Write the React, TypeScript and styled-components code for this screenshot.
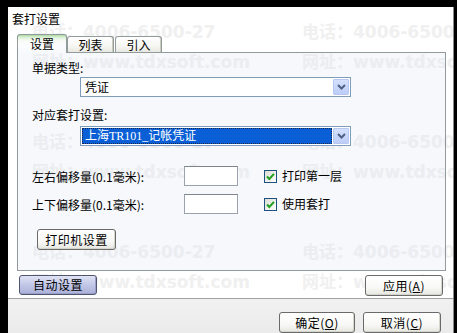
import styled, { createGlobalStyle } from 'styled-components';

const GlobalStyle = createGlobalStyle`
	html, body {
		margin: 0;
		padding: 0;
		background: #000;
		overflow: hidden;
	}
	body {
		font-family: "Noto Sans CJK SC", "Liberation Sans", sans-serif;
		font-size: 12px;
		color: #000;
	}
`;

const Dialog = styled.div`
	position: relative;
	margin: 7px 0 0 8px;
	width: 445px;
	height: 326px;
	background: #fff;
	border-right: 1px solid #8a8a8a;
	overflow: hidden;
`;

const Watermark = styled.div`
	position: absolute;
	inset: 0;
	z-index: 0;
	pointer-events: none;
	display: grid;
	grid-template-columns: repeat(2, 270px);
	grid-auto-rows: 110px;
	padding: 10px 0 0 24px;
	font: bold 17px "DejaVu Sans", "Noto Sans CJK SC", sans-serif;
	line-height: 30px;
	color: #f0f0f0;
	white-space: nowrap;
`;

const Content = styled.div`
	position: relative;
	z-index: 1;
	height: 100%;
	display: flex;
	flex-direction: column;
`;

const Title = styled.div`
	height: 34px;
	box-sizing: border-box;
	padding: 5px 0 0 4px;
	line-height: 14px;
`;

const TabArea = styled.div`
	margin-left: 9px;
	width: 429px;
`;

const TabStrip = styled.div`
	position: relative;
	z-index: 2;
	display: flex;
	align-items: flex-end;
	gap: 1px;
	height: 19px;
	margin-bottom: -1px;
`;

const Tab = styled.div<{ $active?: boolean }>`
	box-sizing: border-box;
	display: flex;
	align-items: center;
	justify-content: center;
	width: ${(p) => (p.$active ? 50 : 47)}px;
	height: ${(p) => (p.$active ? 19 : 16)}px;
	margin-bottom: ${(p) => (p.$active ? 0 : 1)}px;
	margin-right: ${(p) => (p.$active ? -1 : 0)}px;
	border: 1px solid #919b9c;
	border-bottom: none;
	border-radius: 3px 3px 0 0;
	background: ${(p) =>
		p.$active
			? 'linear-gradient(#a9d8a0 0px, #d6eed0 2px, #f4faf2 5px, #fbfcfd 9px, #f8f9fc 100%)'
			: 'linear-gradient(#ffffff, #f6f6f3 60%, #e8e7e0)'};
	box-shadow: ${(p) => (p.$active ? 'none' : 'inset -1px 0 0 #cdcbbd')};
	line-height: 14px;
	padding-top: ${(p) => (p.$active ? 0 : 1)}px;
`;

const Panel = styled.div`
	box-sizing: border-box;
	height: 219px;
	border: 1px solid #919b9c;
	background: rgba(220, 228, 245, 0.25);
	padding: 8px 0 0 14px;
	display: flex;
	flex-direction: column;
	align-items: flex-start;
`;

const FieldLabel = styled.div<{ $gap?: number }>`
	line-height: 14px;
	height: 14px;
	margin-top: ${(p) => p.$gap ?? 0}px;
`;

const Combo = styled.div<{ $gap: number }>`
	box-sizing: border-box;
	width: 271px;
	height: 20px;
	margin: ${(p) => p.$gap}px 0 0 48px;
	border: 1px solid #7f9db9;
	background: #fff;
	display: flex;
	align-items: center;
	padding-left: 1px;
`;

const ComboText = styled.div<{ $selected?: boolean }>`
	flex: 1;
	box-sizing: border-box;
	height: 16px;
	line-height: 14px;
	padding-left: 2px;
	margin-right: 1px;
	color: ${(p) => (p.$selected ? '#fff' : '#000')};
	background: ${(p) => (p.$selected ? '#0a5fd6' : 'transparent')};
	border: 1px ${(p) => (p.$selected ? 'dotted #1a2a50' : 'solid transparent')};
	font-family: ${(p) =>
		p.$selected ? '"Liberation Serif", "Noto Sans CJK SC", serif' : 'inherit'};
`;

const DropButton = styled.div`
	box-sizing: border-box;
	width: 16px;
	height: 16px;
	margin-right: 1px;
	border: 1px solid #b6c8f2;
	border-radius: 1px;
	background: linear-gradient(#d4e0fd, #bccdf8);
	display: flex;
	align-items: center;
	justify-content: center;
`;

const OffsetBlock = styled.div`
	margin-top: 20px;
	display: flex;
	flex-direction: column;
	gap: 8px;
`;

const OffsetRow = styled.div`
	display: flex;
	align-items: center;
	height: 20px;
`;

const OffsetLabel = styled.div`
	width: 152px;
	line-height: 14px;
	padding-top: 2px;
`;

const NumberBox = styled.input`
	box-sizing: border-box;
	width: 54px;
	height: 20px;
	margin: 0;
	border: 1px solid #9aa3ad;
	border-top-color: #7d848c;
	background: #fff;
	font: inherit;
	padding: 0 2px;
`;

const CheckLabel = styled.label`
	display: flex;
	align-items: center;
	gap: 5px;
	margin-left: 26px;
	line-height: 14px;
`;

const CheckBox = styled.span`
	box-sizing: border-box;
	width: 13px;
	height: 13px;
	border: 1px solid #1c5180;
	background: linear-gradient(135deg, #dcdcd5, #ffffff);
	display: flex;
	align-items: center;
	justify-content: center;
`;

const Button = styled.button<{ $w: number; $tone?: 'blue' }>`
	box-sizing: border-box;
	width: ${(p) => p.$w}px;
	height: ${(p) => (p.$tone === 'blue' ? 20 : 21)}px;
	padding: 0;
	margin: 0;
	border: 1px solid ${(p) => (p.$tone === 'blue' ? '#50556f' : '#6a6a6a')};
	border-radius: 3px;
	background: ${(p) =>
		p.$tone === 'blue'
			? 'linear-gradient(#e0e3f4, #c4c9e8 45%, #aab0d8)'
			: 'linear-gradient(#ffffff, #f8f8f6 60%, #e6e6e0)'};
	box-shadow: inset -1px -1px 0 ${(p) => (p.$tone === 'blue' ? '#9aa0c8' : '#d6d5cc')};
	font: 12px "Noto Sans CJK SC", "Liberation Sans", sans-serif;
	color: #000;
	line-height: 14px;
	letter-spacing: 0.5px;
`;

const PrinterButton = styled(Button)`
	margin: 15px 0 0 5px;
`;

const ActionRow = styled.div`
	margin-top: 4px;
	padding: 0 10px 0 11px;
	display: flex;
	justify-content: space-between;
	align-items: flex-start;
	height: 21px;
`;

const Footer = styled.div`
	flex: 1;
	margin-top: 2px;
	border-top: 1px solid #a0a0a0;
	background: linear-gradient(#f1f1f1, #ebebeb);
	padding: 13px 12px 0 0;
	display: flex;
	justify-content: flex-end;
	gap: 8px;
`;

const Chevron = () => (
	<svg width='9' height='6' viewBox='0 0 9 6'>
		<path d='M1 1 L4.5 4.5 L8 1' fill='none' stroke='#4d6185' strokeWidth='2' />
	</svg>
);

const Tick = () => (
	<svg width='11' height='11' viewBox='0 0 11 11'>
		<path d='M2 5.5 L4.3 8 L9 2.8' fill='none' stroke='#21a121' strokeWidth='2' />
	</svg>
);

const marks = [0, 1, 2].flatMap((r) =>
	[0, 1].map((c) => (
		<div key={`${r}-${c}`}>
			<div>电话：4006-6500-27</div>
			<div>网址：www.tdxsoft.com</div>
		</div>
	))
);

export default function App() {
	return (
		<>
			<GlobalStyle />
			<Dialog>
				<Watermark aria-hidden>{marks}</Watermark>
				<Content>
					<Title>套打设置</Title>
					<TabArea>
						<TabStrip>
							<Tab $active>设置</Tab>
							<Tab>列表</Tab>
							<Tab>引入</Tab>
						</TabStrip>
						<Panel>
							<FieldLabel>单据类型:</FieldLabel>
							<Combo $gap={2}>
								<ComboText>凭证</ComboText>
								<DropButton>
									<Chevron />
								</DropButton>
							</Combo>
							<FieldLabel $gap={11}>对应套打设置:</FieldLabel>
							<Combo $gap={4}>
								<ComboText $selected>上海TR101_记帐凭证</ComboText>
								<DropButton>
									<Chevron />
								</DropButton>
							</Combo>
							<OffsetBlock>
								<OffsetRow>
									<OffsetLabel>左右偏移量(0.1毫米):</OffsetLabel>
									<NumberBox />
									<CheckLabel>
										<CheckBox>
											<Tick />
										</CheckBox>
										打印第一层
									</CheckLabel>
								</OffsetRow>
								<OffsetRow>
									<OffsetLabel>上下偏移量(0.1毫米):</OffsetLabel>
									<NumberBox />
									<CheckLabel>
										<CheckBox>
											<Tick />
										</CheckBox>
										使用套打
									</CheckLabel>
								</OffsetRow>
							</OffsetBlock>
							<PrinterButton $w={79}>打印机设置</PrinterButton>
						</Panel>
					</TabArea>
					<ActionRow>
						<Button $w={78} $tone='blue'>
							自动设置
						</Button>
						<Button $w={78}>
							应用(<u>A</u>)
						</Button>
					</ActionRow>
					<Footer>
						<Button $w={76}>
							确定(<u>O</u>)
						</Button>
						<Button $w={78}>
							取消(<u>C</u>)
						</Button>
					</Footer>
				</Content>
			</Dialog>
		</>
	);
}
